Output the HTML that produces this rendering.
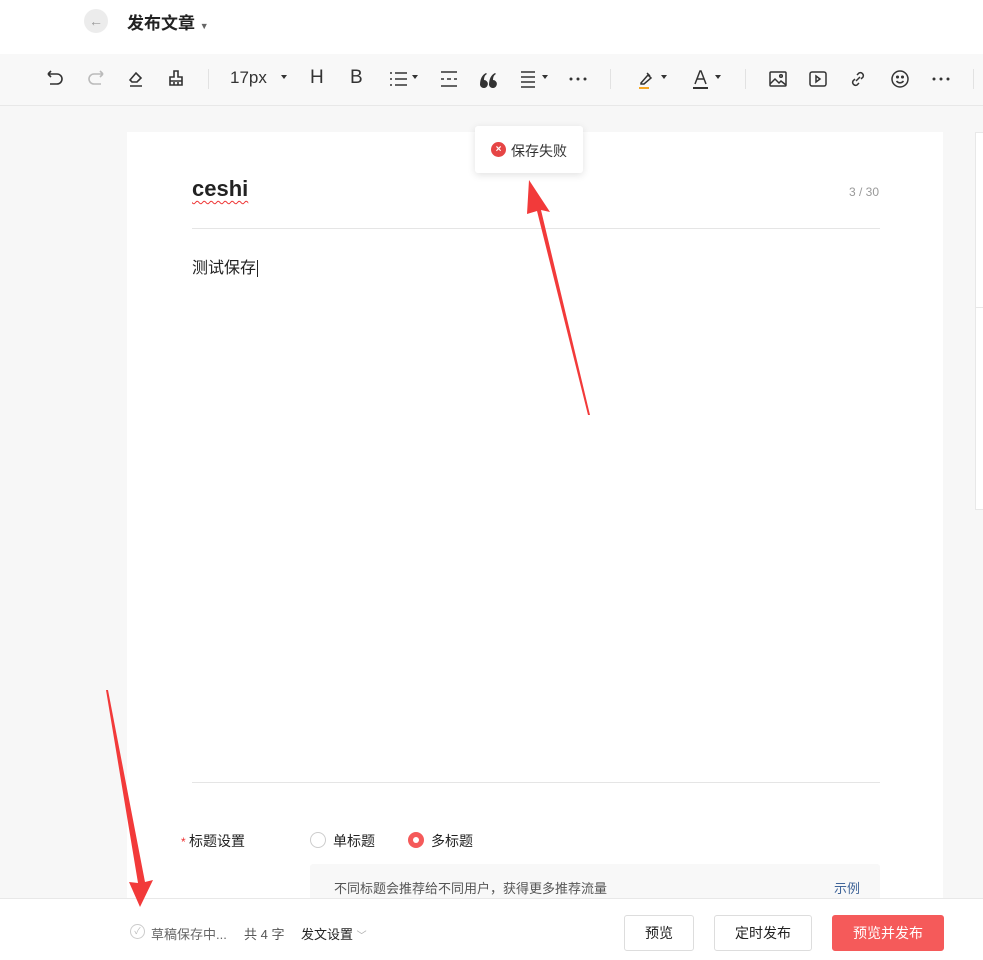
<!DOCTYPE html>
<html><head><meta charset="utf-8"><style>
*{margin:0;padding:0;box-sizing:border-box}
body{width:983px;height:960px;overflow:hidden;background:#f7f7f7;font-family:"Liberation Sans","Noto Sans CJK SC",sans-serif;color:#222;position:relative}
.top{position:absolute;left:0;top:0;width:983px;height:54px;background:#fff}
.back{position:absolute;left:84px;top:9px;width:24px;height:24px;border-radius:50%;background:#ececec;color:#999;font-size:14px;text-align:center;line-height:24px}
.ttl{position:absolute;left:127px;top:9px;font-size:17px;font-weight:bold;color:#222}
.tb{position:absolute;left:0;top:54px;width:983px;height:52px;background:#f8f8f8;border-bottom:1px solid #e8e8e8}
.ic{position:absolute;top:68px}
.car{position:absolute;top:75px;width:0;height:0;border-left:3px solid transparent;border-right:3px solid transparent;border-top:4px solid #333}
.sep{position:absolute;top:69px;width:1px;height:20px;background:#e2e2e2}
.card{position:absolute;left:127px;top:132px;width:816px;height:828px;background:#fff}
.side{position:absolute;left:975px;top:132px;width:10px;height:378px;background:#fff;border:1px solid #e8e8e8}
.foot{position:absolute;left:0;top:898px;width:983px;height:62px;background:#fff;border-top:1px solid #e8e8e8}
.btn{position:absolute;top:915px;height:36px;border:1px solid #ddd;border-radius:3px;background:#fff;font-size:14px;text-align:center;line-height:34px;color:#222}
.toast{position:absolute;left:475px;top:126px;width:108px;height:47px;background:#fff;box-shadow:0 2px 8px rgba(0,0,0,.12);border-radius:3px;font-size:14px;color:#333}
</style></head><body>
<div class="top"><div class="back">←</div><div class="ttl">发布文章 <span style="font-size:9px;color:#666;font-weight:normal">▼</span></div></div>
<div class="tb"></div>
<svg class="ic" style="left:44px" width="22" height="22" viewBox="0 0 22 22" fill="none" stroke="#333" stroke-width="1.6"><path d="M4 6h9a5 5 0 0 1 0 10H6M4 6l3-3M4 6l3 3"/></svg>
<svg class="ic" style="left:85px" width="22" height="22" viewBox="0 0 22 22" fill="none" stroke="#bbb" stroke-width="1.6"><path d="M18 6H9a5 5 0 0 0 0 10h7M18 6l-3-3M18 6l-3 3"/></svg>
<svg class="ic" style="left:125px" width="22" height="22" viewBox="0 0 22 22" fill="none" stroke="#333" stroke-width="1.6"><path d="M5 12l6-7 5 5-4 4H7zM5 18h12"/></svg>
<svg class="ic" style="left:165px" width="22" height="22" viewBox="0 0 22 22" fill="none" stroke="#333" stroke-width="1.6"><path d="M9 3h4v6h4v8H5V9h4zM5 13h12M9 17v-3M13 17v-3"/></svg>
<div class="sep" style="left:208px"></div>
<div style="position:absolute;left:230px;top:68px;font-size:17px;color:#333">17px</div>
<div class="car" style="left:281px"></div>
<div style="position:absolute;left:310px;top:67px;font-size:19px;color:#333">H</div>
<div style="position:absolute;left:350px;top:67px;font-size:19px;color:#333">B</div>
<svg class="ic" style="left:388px" width="22" height="22" viewBox="0 0 22 22" fill="none" stroke="#333" stroke-width="1.5"><path d="M7 5h12M7 11h12M7 17h12"/><path d="M2 5h2M2 11h2M2 17h2"/></svg>
<div class="car" style="left:412px"></div>
<svg class="ic" style="left:438px" width="22" height="22" viewBox="0 0 22 22" fill="none" stroke="#333" stroke-width="1.5"><path d="M3 4h16M3 18h16M3 11h3M9 11h4M16 11h3"/></svg>
<svg class="ic" style="left:477px" width="22" height="22" viewBox="0 0 22 22" fill="#333"><path d="M3 17a4 4 0 1 0 4-5c0-3 1-5 3-6l-1-1c-4 2-6 6-6 12zM12 17a4 4 0 1 0 4-5c0-3 1-5 3-6l-1-1c-4 2-6 6-6 12z"/></svg>
<svg class="ic" style="left:518px" width="22" height="22" viewBox="0 0 22 22" fill="none" stroke="#333" stroke-width="1.5"><path d="M3 4h14M3 9h14M3 14h14M3 19h14"/></svg>
<div class="car" style="left:542px"></div>
<svg class="ic" style="left:567px" width="22" height="22" viewBox="0 0 22 22" fill="#333"><circle cx="4" cy="11" r="1.5"/><circle cx="11" cy="11" r="1.5"/><circle cx="18" cy="11" r="1.5"/></svg>
<div class="sep" style="left:610px"></div>
<svg class="ic" style="left:636px" width="22" height="22" viewBox="0 0 22 22" fill="none" stroke="#333" stroke-width="1.5"><path d="M5 15l7-8 3 3-7 6H5zM11 5l3 3"/><path d="M3 20h10" stroke="#f5a623" stroke-width="2"/></svg>
<div class="car" style="left:661px"></div>
<svg class="ic" style="left:690px" width="22" height="22" viewBox="0 0 22 22" fill="none" stroke="#333" stroke-width="1.5"><path d="M5 16L10 3h1l5 13M7 11h7"/><path d="M3 20h15" stroke-width="2"/></svg>
<div class="car" style="left:715px"></div>
<div class="sep" style="left:745px"></div>
<svg class="ic" style="left:767px" width="22" height="22" viewBox="0 0 22 22" fill="none" stroke="#333" stroke-width="1.5"><rect x="3" y="4" width="16" height="14" rx="1"/><path d="M3 16l5-5 4 4 2-2 5 4"/><circle cx="14" cy="8" r="1.3"/></svg>
<svg class="ic" style="left:807px" width="22" height="22" viewBox="0 0 22 22" fill="none" stroke="#333" stroke-width="1.5"><rect x="3" y="4" width="16" height="14" rx="2"/><path d="M9 8l4 3-4 3z"/></svg>
<svg class="ic" style="left:847px" width="22" height="22" viewBox="0 0 22 22" fill="none" stroke="#333" stroke-width="1.5"><path d="M9 13l4-4M10 7l2-2a3 3 0 0 1 4 4l-2 2M12 15l-2 2a3 3 0 0 1-4-4l2-2"/></svg>
<svg class="ic" style="left:889px" width="22" height="22" viewBox="0 0 22 22" fill="none" stroke="#333" stroke-width="1.5"><circle cx="11" cy="11" r="8"/><path d="M7.5 13c2 2.5 5 2.5 7 0"/><circle cx="8.5" cy="9" r=".8" fill="#333"/><circle cx="13.5" cy="9" r=".8" fill="#333"/></svg>
<svg class="ic" style="left:930px" width="22" height="22" viewBox="0 0 22 22" fill="#333"><circle cx="4" cy="11" r="1.5"/><circle cx="11" cy="11" r="1.5"/><circle cx="18" cy="11" r="1.5"/></svg>
<div class="sep" style="left:973px"></div>

<div class="side"><div style="position:absolute;left:0;top:174px;width:10px;height:1px;background:#e8e8e8"></div></div>
<div class="card">
<div style="position:absolute;left:65px;top:44px;font-size:22px;font-weight:bold;color:#222;text-decoration:underline wavy #e33;text-decoration-thickness:1px;text-underline-offset:4px">ceshi</div>
<div style="position:absolute;left:722px;top:53px;font-size:12px;color:#999">3 / 30</div>
<div style="position:absolute;left:65px;top:96px;width:688px;height:1px;background:#e5e5e5"></div>
<div style="position:absolute;left:65px;top:122px;font-size:16px;color:#222">测试保存<span style="border-left:1px solid #222;margin-left:1px"></span></div>
<div style="position:absolute;left:65px;top:650px;width:688px;height:1px;background:#e5e5e5"></div>
<div style="position:absolute;left:54px;top:699px;font-size:14px;color:#222"><span style="color:#e33;font-size:12px">* </span>标题设置</div>
<div style="position:absolute;left:183px;top:700px;width:16px;height:16px;border:1px solid #ccc;border-radius:50%"></div>
<div style="position:absolute;left:206px;top:699px;font-size:14px">单标题</div>
<div style="position:absolute;left:281px;top:700px;width:16px;height:16px;border-radius:50%;background:#f55a5a"><div style="margin:5px;width:6px;height:6px;border-radius:50%;background:#fff"></div></div>
<div style="position:absolute;left:304px;top:699px;font-size:14px">多标题</div>
<div style="position:absolute;left:183px;top:732px;width:570px;height:40px;background:#f8f8f8;border-radius:3px"></div>
<div style="position:absolute;left:207px;top:746px;font-size:13px;color:#555">不同标题会推荐给不同用户，获得更多推荐流量</div>
<div style="position:absolute;left:707px;top:746px;font-size:13px;color:#406599">示例</div>
</div>
<div class="foot"></div>
<div style="position:absolute;left:130px;top:924px;width:15px;height:15px;border:1px solid #ccc;border-radius:50%;font-size:9px;color:#bbb;text-align:center;line-height:13px">✓</div>
<div style="position:absolute;left:151px;top:924px;font-size:13px;color:#666">草稿保存中...</div>
<div style="position:absolute;left:244px;top:924px;font-size:13px;color:#555">共 4 字</div>
<div style="position:absolute;left:301px;top:924px;font-size:13px;color:#222">发文设置 <span style="color:#aaa;font-size:10px">﹀</span></div>
<div class="btn" style="left:624px;width:70px">预览</div>
<div class="btn" style="left:714px;width:98px">定时发布</div>
<div class="btn" style="left:832px;width:112px;background:#f55a5a;border-color:#f55a5a;color:#fff">预览并发布</div>
<div class="toast"><div style="position:absolute;left:16px;top:16px;width:15px;height:15px;border-radius:50%;background:#e64545;color:#fff;font-size:10px;font-weight:bold;text-align:center;line-height:15px">×</div><div style="position:absolute;left:36px;top:15px">保存失败</div></div>
<svg style="position:absolute;left:0;top:0" width="983" height="960"><polygon points="529,180 550,212 541,210 590,415 588,415 537,211 527,214" fill="#f23a3a"/><polygon points="140,907 153,880 145,882 108,690 106,690 138,883 129,882" fill="#f23a3a"/></svg>
</body></html>
